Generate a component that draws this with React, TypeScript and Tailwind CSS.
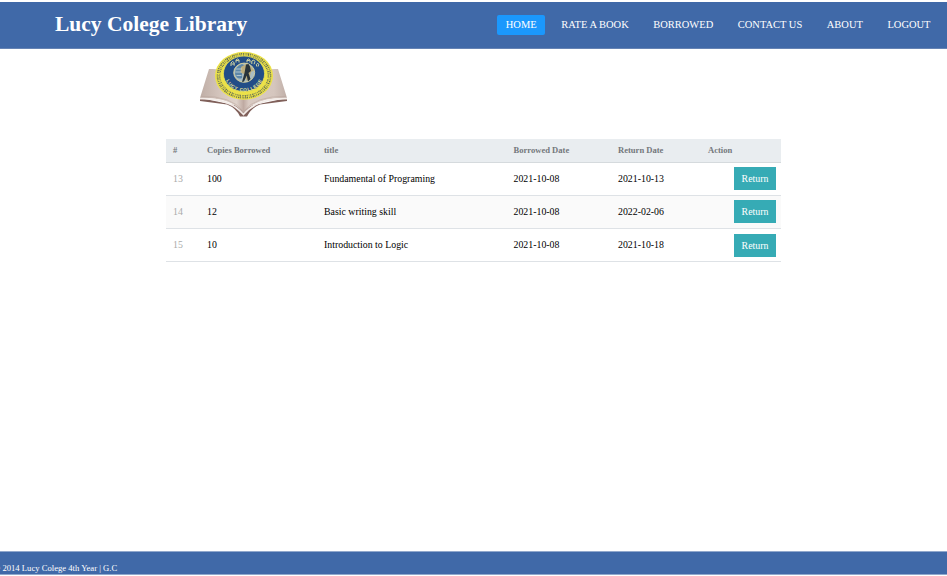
const nav = ["HOME", "RATE A BOOK", "BORROWED", "CONTACT US", "ABOUT", "LOGOUT"];

const rows = [
  { id: 13, copies: 100, title: "Fundamental of Programing", borrowed: "2021-10-08", due: "2021-10-13" },
  { id: 14, copies: 12, title: "Basic writing skill", borrowed: "2021-10-08", due: "2022-02-06" },
  { id: 15, copies: 10, title: "Introduction to Logic", borrowed: "2021-10-08", due: "2021-10-18" },
];

function Logo() {
  return (
    <svg width="92" height="70" viewBox="0 0 92 70" className="ml-[197px] mt-[2px] block shrink-0" aria-label="Lucy College">
      <defs>
        <linearGradient id="page" x1="0" x2="1">
          <stop offset="0" stopColor="#bfaea6" />
          <stop offset=".25" stopColor="#d6c7bf" />
          <stop offset=".42" stopColor="#dfd2ca" />
          <stop offset=".5" stopColor="#bfaaa2" />
          <stop offset=".56" stopColor="#d9cac2" />
          <stop offset=".85" stopColor="#d5c6be" />
          <stop offset="1" stopColor="#c0afa8" />
        </linearGradient>
        <path id="lower" d="M27.7 23.5 A19 16.6 0 0 0 66.3 23.5" />
      </defs>
      <path d="M3 47 L3 50 L30 53.5 Q39 57 43 65.5 L50 65.5 Q54 57 63 53.5 L90 50 L90 47 L47 56Z" fill="#80605a" />
      <path d="M12 18 L3 47 Q34 46 46.5 62 Q59 46 90 47 L81 18 Q57 17 47 31 Q36 17 12 18Z" fill="url(#page)" />
      <path d="M3 47.6 Q33 47 46.5 63.5 Q60 47 90 47.6" fill="none" stroke="#f3ece8" strokeWidth="1.6" />
      <path d="M4 45.4 Q34 44.5 46.5 60.5 Q59 44.5 89 45.4" fill="none" stroke="#b7a29a" strokeWidth=".5" />
      <ellipse cx="47" cy="24.8" rx="29" ry="24" fill="#ebe149" />
      <ellipse cx="47" cy="24.8" rx="25.5" ry="21" fill="none" stroke="#626d55" strokeWidth="3.6" strokeDasharray="1 .9 .6 1.1 .9 .6 1.2 .9" />
      <ellipse cx="47" cy="24.8" rx="25.4" ry="20.8" fill="none" stroke="#e3d948" strokeWidth="1.2" strokeDasharray="1.7 1" />
      <ellipse cx="47" cy="22.8" rx="20.6" ry="17.8" fill="#224d87" stroke="#e9e058" strokeWidth=".8" />
      <g fill="none" stroke="#e6e3a4" strokeWidth=".9">
        <path d="M34 15v-3l1.5-1.5 1.7 1.2v3M34.5 13h2.5M39 11.5V9q1.5-2 3 0v2.5M39.2 9.5h2.4M50 11.5V9q1.5-2 3 0v2.5M50.2 9.5h2.4M54.8 13v-3l2-1 1.2 1.7-1 2.5M59.8 15.5l-.5-2 1.4-1.3 1 1-.6 2.3" />
      </g>
      <ellipse cx="47.2" cy="21.7" rx="10.5" ry="9.6" fill="#a9bcc2" stroke="#ddd49a" strokeWidth=".9" />
      <path d="M38 23 Q38 15 45 13 L49 15 L45 19 L45 27 Q40 29 38 23Z" fill="#5d87a8" />
      <path d="M44 16 L49 13 L54 15.5 L57 19.5 L54 21 L52.5 27 L49.5 30 L47 23 L43.5 21.5Z" fill="#bdae7d" />
      <path d="M49 13.5 L51.5 13 L53 15.5 L54 20 L51.5 22 L53.5 28 L51 30.5 L49.7 24.5 L47 30.5 L45 31 L47.5 22Z" fill="#29343b" />
      <path d="M39 18h6M38.5 21h6M39.5 24.5h5" stroke="#d4dcdc" strokeWidth=".7" />
      <text fontSize="4.6" fontWeight="bold" fill="#f3ee9a" fontFamily="Liberation Sans, Arial, sans-serif">
        <textPath href="#lower" startOffset="50%" textAnchor="middle" textLength="44">LUCY COLLEGE</textPath>
      </text>
    </svg>
  );
}

export default function App() {
  return (
    <div className="flex h-[576px] w-[947px] flex-col overflow-hidden bg-white pt-[2px] font-['Liberation_Serif','Times_New_Roman',serif]">
      <header className="flex h-[47px] shrink-0 items-center justify-between border-b border-[#6583b4] bg-[#4069a8] pl-[55px] pr-[8px] text-white">
        <h1 className="pb-px text-[21.5px] font-bold leading-[45px]">Lucy Colege Library</h1>
        <nav className="flex gap-[7.6px] text-[10.47px] leading-[20px]">
          {nav.map((item) => (
            <a key={item} className={`whitespace-nowrap rounded-[2px] px-[8.5px] ${item === "HOME" ? "bg-[#1b98fd]" : ""}`}>
              {item}
            </a>
          ))}
        </nav>
      </header>

      <Logo />

      <table className="ml-[166px] mt-[18px] w-[615px] table-fixed border-collapse text-left text-[9.85px] text-black">
        <colgroup>
          <col className="w-[34px]" />
          <col className="w-[117px]" />
          <col className="w-[189.5px]" />
          <col className="w-[104.5px]" />
          <col className="w-[90px]" />
          <col className="w-[80px]" />
        </colgroup>
        <thead>
          <tr className="h-[23px] border-b border-[#d5dadd] bg-[#e9edf0] text-[8.57px] leading-[20px] text-[#74787c]">
            {["#", "Copies Borrowed", "title", "Borrowed Date", "Return Date", "Action"].map((h) => (
              <th key={h} className="whitespace-nowrap px-[7px] pb-px pt-0 font-bold">{h}</th>
            ))}
          </tr>
        </thead>
        <tbody>
          {rows.map((r) => (
            <tr key={r.id} className="h-[33.3px] border-b border-[#dee2e6] even:bg-[#fafafa]">
              <td className="px-[7px] pt-px text-[#aaa]">{r.id}</td>
              <td className="px-[7px] pt-px">{r.copies}</td>
              <td className="px-[7px] pt-px">{r.title}</td>
              <td className="px-[7px] pt-px">{r.borrowed}</td>
              <td className="px-[7px] pt-px">{r.due}</td>
              <td className="pr-[5px]">
                <button className="ml-auto block h-[23px] w-[42px] bg-[#36abb5] text-center text-[9.9px] leading-[23px] text-white">Return</button>
              </td>
            </tr>
          ))}
        </tbody>
      </table>

      <footer className="mb-[1px] mt-auto h-[24px] shrink-0 whitespace-nowrap border-y border-[#91a8cc] bg-[#4069a8] pt-[11px] text-[8.65px] leading-[11px] text-white">
        <span className="-ml-[6.3px]">© 2014 Lucy Colege 4th Year | G.C</span>
      </footer>
    </div>
  );
}
